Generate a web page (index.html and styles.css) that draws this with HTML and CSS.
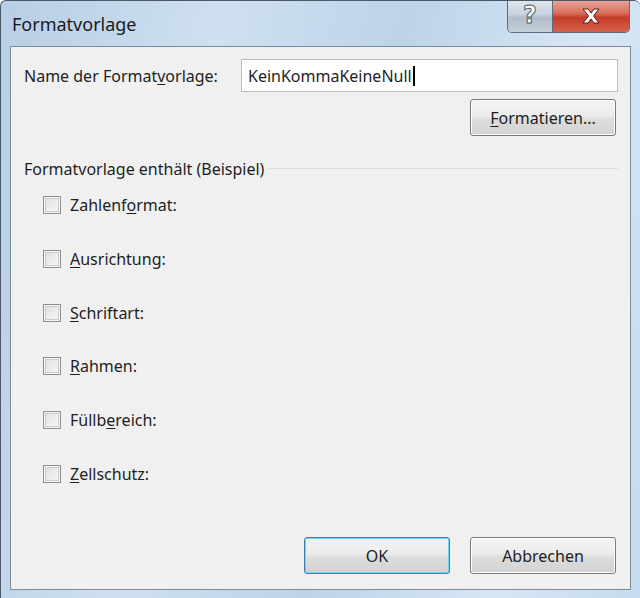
FILE: index.html
```html
<!DOCTYPE html>
<html lang="de">
<head>
<meta charset="utf-8">
<title>Formatvorlage</title>
<link rel="stylesheet" href="styles.css">
</head>
<body>
<div class="window">
  <div class="titlebar">
    <div class="title">Formatvorlage</div>
    <div class="caption-buttons">
      <div class="cbtn help"><span class="glyph">?</span></div>
      <div class="cbtn close">
        <svg width="22" height="16" viewBox="0 0 22 16">
          <path d="M3 1 L8 1 L11 5 L14 1 L19 1 L13.5 8 L19 15 L14 15 L11 11 L8 15 L3 15 L8.5 8 Z" fill="#ffffff" stroke="#5a1a12" stroke-width="1" stroke-linejoin="round"/>
        </svg>
      </div>
    </div>
  </div>
  <div class="client">
    <div class="name-row">
      <label class="label">Name der Format<u>v</u>orlage:</label>
      <div class="input"><span>KeinKommaKeineNull</span><span class="caret"></span></div>
    </div>
    <div class="format-row">
      <button class="btn"><u>F</u>ormatieren...</button>
    </div>
    <div class="group-head">
      <span class="group-label">Formatvorlage enthält (Beispiel)</span>
      <span class="group-line"></span>
    </div>
    <div class="checks">
      <div class="check"><span class="box"></span><span>Zahlenf<u>o</u>rmat:</span></div>
      <div class="check"><span class="box"></span><span><u>A</u>usrichtung:</span></div>
      <div class="check"><span class="box"></span><span><u>S</u>chriftart:</span></div>
      <div class="check"><span class="box"></span><span><u>R</u>ahmen:</span></div>
      <div class="check"><span class="box"></span><span>Füllb<u>e</u>reich:</span></div>
      <div class="check"><span class="box"></span><span><u>Z</u>ellschutz:</span></div>
    </div>
    <div class="footer">
      <button class="btn default">OK</button>
      <button class="btn">Abbrechen</button>
    </div>
  </div>
</div>
</body>
</html>
```

FILE: styles.css
```css
html, body {
  margin: 0;
  padding: 0;
  background: #ffffff;
}
body {
  font-family: "Noto Sans", "Open Sans", sans-serif;
  color: #1e1e1e;
}
.window {
  width: 640px;
  height: 598px;
  box-sizing: border-box;
  border-left: 1px solid #4a5868;
  border-top: 1px solid #4a5868;
  border-radius: 6px 6px 0 0;
  background: linear-gradient(100deg, #b7cee6 0%, #cfe0f1 30%, #bcd3ea 55%, #d7e6f4 80%, #c6dbef 100%);
  display: flex;
  flex-direction: column;
  overflow: hidden;
}
.titlebar {
  height: 45px;
  display: flex;
  justify-content: space-between;
  align-items: flex-start;
  flex: none;
}
.title {
  font-size: 18px;
  margin: 11px 0 0 11px;
  color: #1a1a1a;
}
.caption-buttons {
  display: flex;
  margin-right: 10px;
  margin-top: -1px;
  border: 1px solid #5d6b7c;
  border-top: none;
  border-radius: 0 0 5px 5px;
  overflow: hidden;
  height: 32px;
}
.cbtn {
  display: flex;
  align-items: center;
  justify-content: center;
  height: 32px;
}
.help {
  width: 44px;
  background: linear-gradient(#dfe6ee 0%, #c9d3de 45%, #b1bdca 55%, #c3ced9 100%);
  border-right: 1px solid #5d6b7c;
}
.help .glyph {
  font-family: "DejaVu Sans", sans-serif;
  font-weight: bold;
  font-size: 24px;
  color: #ffffff;
  -webkit-text-stroke: 1px #4f5b68;
  line-height: 1;
  margin-top: -2px;
}
.close {
  width: 76px;
  background: linear-gradient(#eba597 0%, #d9705d 40%, #c43c28 55%, #d4624c 100%);
}
.client {
  flex: 1;
  margin: 0 9px 8px 9px;
  border: 1px solid #7d8b99;
  background: #f0f0f0;
  display: flex;
  flex-direction: column;
  padding: 12px 12px 15px 13px;
  font-size: 16px;
}
.name-row {
  display: flex;
  align-items: center;
  justify-content: space-between;
}
.label {
  white-space: nowrap;
}
.input {
  width: 377px;
  height: 33px;
  box-sizing: border-box;
  border: 1px solid #b9bcc1;
  background: #ffffff;
  display: flex;
  align-items: center;
  padding-left: 6px;
}
.caret {
  display: inline-block;
  width: 2px;
  height: 20px;
  background: #000;
  margin-left: 1px;
}
.format-row {
  display: flex;
  justify-content: flex-end;
  margin-top: 7px;
  padding-right: 2px;
}
.btn {
  width: 146px;
  height: 37px;
  box-sizing: border-box;
  border: 1px solid #7a7a7a;
  border-radius: 3px;
  background: linear-gradient(#f4f4f4 0%, #ececec 45%, #dddddd 55%, #d2d2d2 100%);
  box-shadow: inset 0 0 0 1px #fcfcfc;
  font-family: inherit;
  font-size: 16px;
  color: #1e1e1e;
  padding: 0;
}
.btn.default {
  border-color: #3c7fb1;
  box-shadow: inset 0 0 0 1px #6fd4f5;
}
.group-head {
  display: flex;
  align-items: center;
  margin-top: 22px;
}
.group-label {
  white-space: nowrap;
}
.group-line {
  flex: 1;
  border-top: 1px solid #dcdcdc;
  margin-left: 4px;
  margin-top: -2px;
}
.checks {
  display: flex;
  flex-direction: column;
  gap: 17.8px;
  padding-left: 19px;
  margin-top: 7px;
}
.check {
  display: flex;
  align-items: center;
  height: 36px;
  gap: 9px;
}
.box {
  width: 18px;
  height: 18px;
  box-sizing: border-box;
  border: 1px solid #8e8f8f;
  background: linear-gradient(135deg, #dcdcdc 0%, #eeeeee 60%, #f8f8f8 100%);
  box-shadow: inset 0 0 0 1px #f4f4f4, inset 0 0 0 2px #cdcdcd;
}
.footer {
  margin-top: auto;
  display: flex;
  justify-content: flex-end;
  gap: 20px;
  padding-right: 2px;
}
u {
  text-decoration-thickness: 1px;
  text-underline-offset: 2px;
}
```
